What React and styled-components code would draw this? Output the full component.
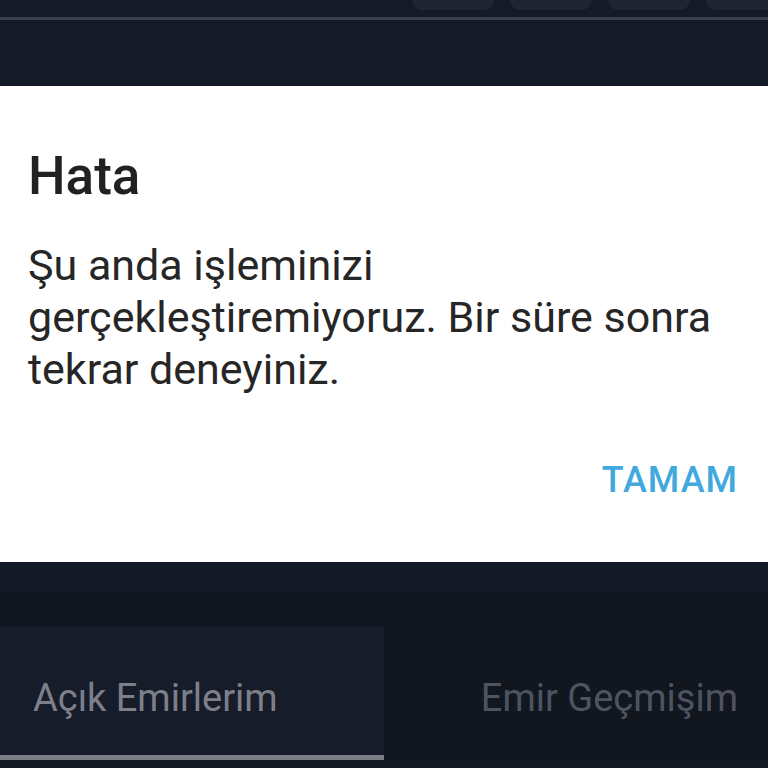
import styled, { createGlobalStyle } from "styled-components";

const GlobalStyle = createGlobalStyle`
  html, body {
    margin: 0;
    padding: 0;
    background: #131822;
  }
  body {
    font-family: Roboto, "Noto Sans", "Liberation Sans", sans-serif;
  }
`;

const Screen = styled.div`
  width: 768px;
  height: 768px;
  overflow: hidden;
  display: flex;
  flex-direction: column;
  background: #131822;
`;

const Header = styled.div`
  height: 86px;
  display: flex;
  flex-direction: column;
  background: #141a26;
`;

const ChipRow = styled.div`
  display: flex;
  gap: 16px;
  padding-left: 412px;
  margin-right: -20px;
  height: 10px;
`;

const Chip = styled.div`
  flex: 1;
  height: 10px;
  background: #1f2533;
  border-radius: 0 0 10px 10px;
`;

const Divider = styled.div`
  margin-top: 7px;
  height: 3px;
  background: #3a404b;
`;

const Dialog = styled.div`
  background: #ffffff;
  height: 476px;
  box-sizing: border-box;
  padding: 60px 30px 0 28px;
  display: flex;
  flex-direction: column;
`;

const Title = styled.h2`
  margin: 0;
  font-size: 53px;
  font-weight: 500;
  color: #212121;
  line-height: 60px;
`;

const Message = styled.p`
  margin: 33px 0 0;
  font-size: 43px;
  line-height: 52px;
  color: #262626;
`;

const Actions = styled.div`
  margin-top: 64px;
  display: flex;
  justify-content: flex-end;
`;

const TextButton = styled.button`
  background: none;
  border: none;
  padding: 0;
  font-family: inherit;
  font-size: 36px;
  font-weight: 500;
  letter-spacing: 1px;
  color: #42a9de;
  cursor: pointer;
`;

const Band = styled.div`
  height: 30px;
  background: #141a25;
`;

const Gap = styled.div`
  height: 34px;
  background: #10151e;
`;

const Tabs = styled.div`
  display: flex;
  height: 134px;
`;

const Tab = styled.div`
  flex: 1;
  display: flex;
  align-items: center;
  justify-content: ${(p) => (p.$active ? "flex-start" : "flex-end")};
  padding: 14px 30px 0 33px;
  box-sizing: border-box;
  background: ${(p) => (p.$active ? "#161c29" : "#11161f")};
  border-bottom: 5px solid ${(p) => (p.$active ? "#7a7d86" : "transparent")};
  font-size: 38px;
  color: ${(p) => (p.$active ? "#7d8089" : "#4e545f")};
`;

export default function App() {
  return (
    <>
      <GlobalStyle />
      <Screen>
        <Header>
          <ChipRow>
            <Chip />
            <Chip />
            <Chip />
            <Chip />
          </ChipRow>
          <Divider />
        </Header>
        <Dialog>
          <Title>Hata</Title>
          <Message>
            Şu anda işleminizi gerçekleştiremiyoruz. Bir süre sonra tekrar
            deneyiniz.
          </Message>
          <Actions>
            <TextButton>TAMAM</TextButton>
          </Actions>
        </Dialog>
        <Band />
        <Gap />
        <Tabs>
          <Tab $active>Açık Emirlerim</Tab>
          <Tab>Emir Geçmişim</Tab>
        </Tabs>
      </Screen>
    </>
  );
}
